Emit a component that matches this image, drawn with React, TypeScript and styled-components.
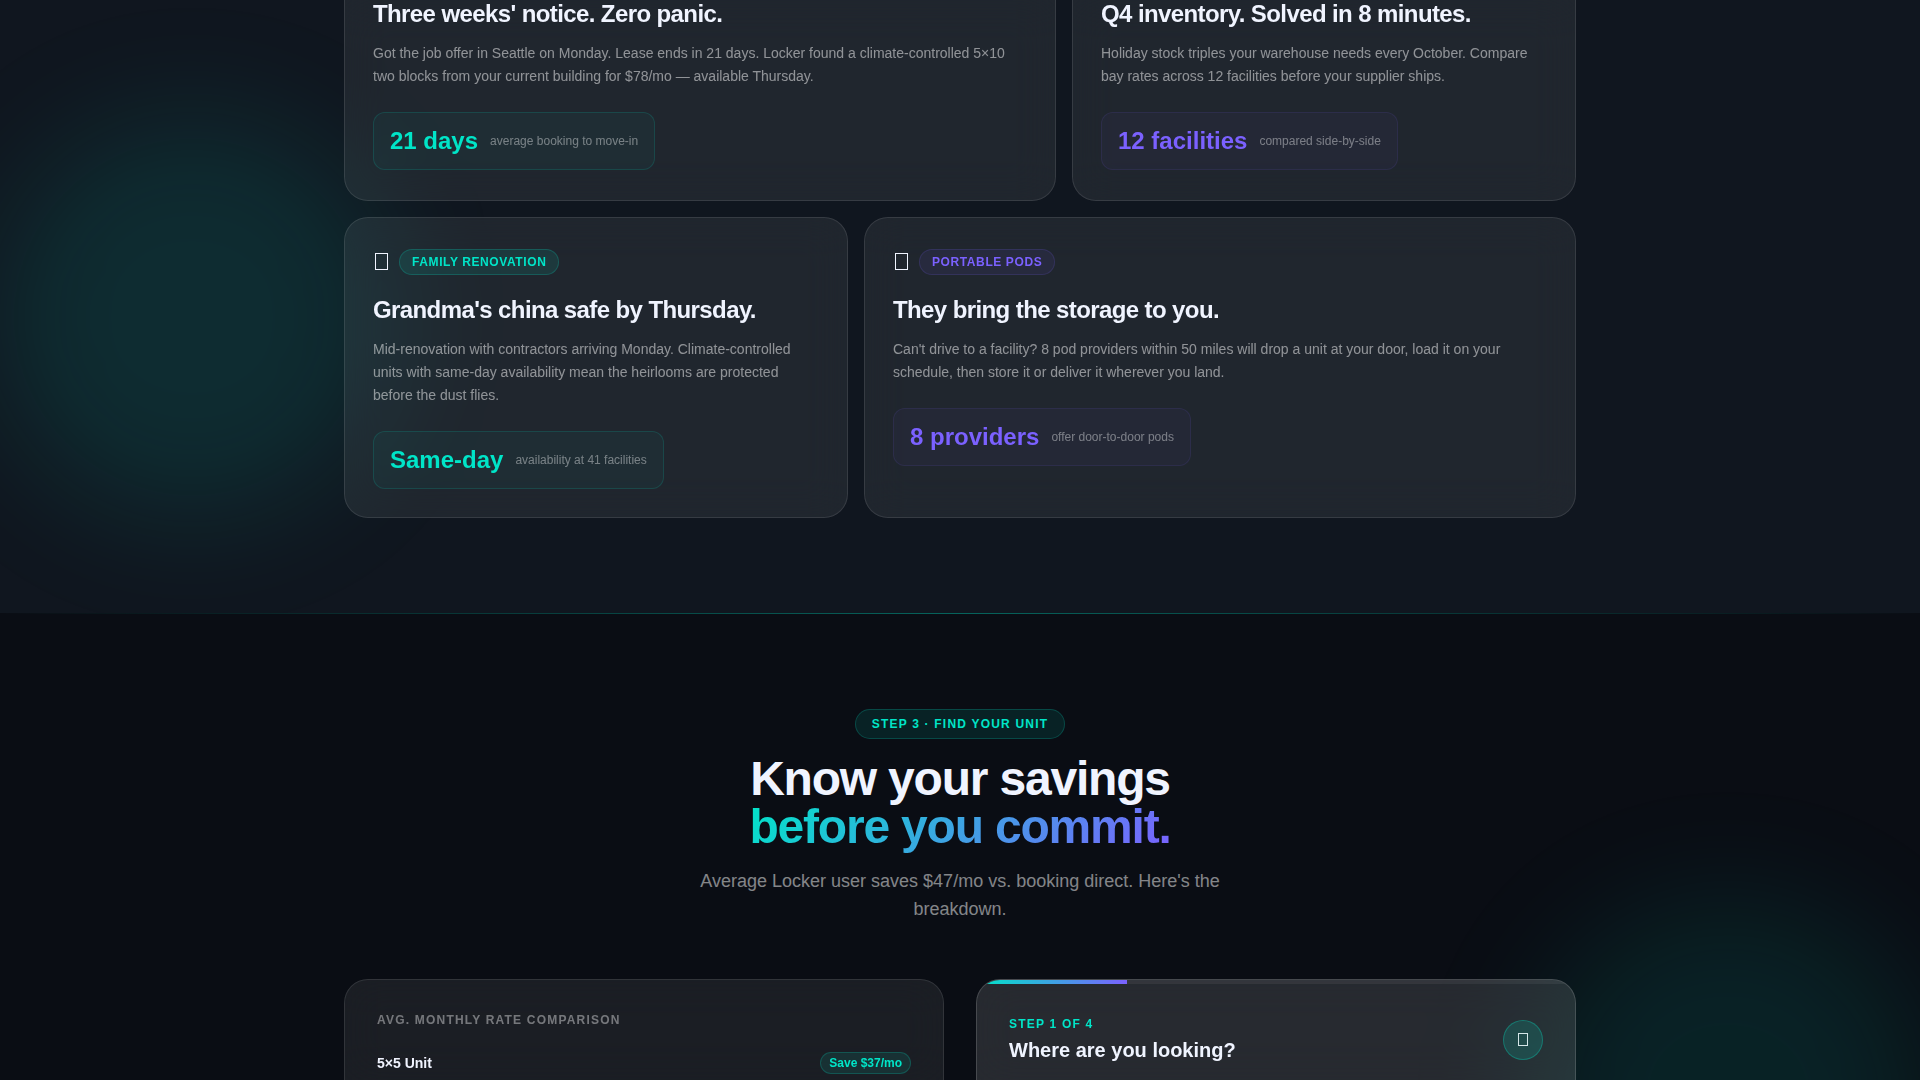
import React from "react";
import styled, { createGlobalStyle, css } from "styled-components";

type Tone = "teal" | "violet";

const rgb: Record<Tone, string> = { teal: "0, 229, 200", violet: "123, 97, 255" };

const GlobalStyle = createGlobalStyle`
  *, *::before, *::after { box-sizing: border-box; }
  body {
    margin: 0;
    background: #0a0d14;
    color: #f0f4ff;
    font-family: "Liberation Sans", Arial, sans-serif;
    font-size: 16px;
    line-height: 24px;
    overflow: hidden;
  }
  h2, h3, p { margin: 0; }
`;

const Page = styled.main`
  height: 100vh;
  overflow: hidden;
`;

const Container = styled.div`
  position: relative;
  max-width: 1280px;
  margin: 0 auto;
  padding: 0 24px;
`;

const Glow = styled.div<{ $strength: number }>`
  position: absolute;
  width: 400px;
  height: 400px;
  border-radius: 50%;
  background: rgba(0, 229, 200, ${(p) => p.$strength});
  filter: blur(60px);
  pointer-events: none;
`;

const StoriesSection = styled.section`
  position: relative;
  overflow: hidden;
  background: #10161f;
  padding-bottom: 95px;

  ${Glow} {
    left: calc(10% - 200px);
    bottom: 96px;
  }
`;

const StoryGrid = styled.div`
  display: grid;
  grid-template-columns: repeat(12, 1fr);
  gap: 16px;
  margin-top: -31px;
`;

const StoryCard = styled.article<{ $span: number; $minHeight?: number }>`
  grid-column: span ${(p) => p.$span};
  min-height: ${(p) => p.$minHeight ?? 280}px;
  padding: 28px;
  border: 1px solid rgba(255, 255, 255, 0.1);
  border-radius: 24px;
  background: rgba(255, 255, 255, 0.07);
  backdrop-filter: blur(20px);
`;

const StoryHead = styled.div`
  display: flex;
  align-items: center;
  gap: 8px;
  height: 32px;
  margin-bottom: 16px;
`;

const StoryIcon = styled.svg`
  width: 18px;
  height: 18px;
`;

const tinted = css<{ $tone: Tone }>`
  color: rgb(${(p) => rgb[p.$tone]});
`;

const Tag = styled.span<{ $tone: Tone }>`
  ${tinted}
  padding: 4px 12px;
  border: 1px solid rgba(${(p) => rgb[p.$tone]}, ${(p) => (p.$tone === "teal" ? 0.2 : 0.15)});
  border-radius: 999px;
  background: rgba(${(p) => rgb[p.$tone]}, ${(p) => (p.$tone === "teal" ? 0.1 : 0.08)});
  font-size: 12px;
  line-height: 16px;
  font-weight: 700;
  letter-spacing: 0.05em;
  text-transform: uppercase;
`;

const StoryTitle = styled.h3`
  margin-bottom: 12px;
  font-size: 24px;
  line-height: 32px;
  font-weight: 700;
  letter-spacing: -0.025em;
`;

const StoryText = styled.p`
  margin-bottom: 24px;
  color: rgba(255, 255, 255, 0.5);
  font-size: 14px;
  line-height: 23px;
`;

const Stat = styled.div<{ $tone: Tone }>`
  display: flex;
  align-items: center;
  gap: 12px;
  width: fit-content;
  padding: 12px 16px;
  border: 1px solid rgba(${(p) => rgb[p.$tone]}, ${(p) => (p.$tone === "teal" ? 0.15 : 0.1)});
  border-radius: 12px;
  background: rgba(${(p) => rgb[p.$tone]}, 0.04);
`;

const StatValue = styled.strong<{ $tone: Tone }>`
  ${tinted}
  font-size: 24px;
  line-height: 32px;
`;

const StatLabel = styled.span`
  color: rgba(255, 255, 255, 0.4);
  font-size: 12px;
  line-height: 16px;
`;

const SavingsSection = styled.section`
  position: relative;
  overflow: hidden;
  min-height: 700px;
  padding: 96px 0;
  background: #0a0d14;

  &::before {
    content: "";
    position: absolute;
    inset: 0 0 auto;
    height: 1px;
    background: linear-gradient(90deg, transparent, rgba(0, 229, 200, 0.4), transparent);
  }

  ${Glow} {
    left: calc(90% - 200px);
    top: 287px;
  }
`;

const SectionHead = styled.header`
  display: flex;
  flex-direction: column;
  align-items: center;
  gap: 16px;
  margin-bottom: 56px;
  text-align: center;
`;

const StepPill = styled.span`
  padding: 6px 16px;
  border: 1px solid rgba(0, 229, 200, 0.2);
  border-radius: 999px;
  background: rgba(0, 229, 200, 0.1);
  color: rgb(0, 229, 200);
  font-size: 12px;
  line-height: 16px;
  font-weight: 700;
  letter-spacing: 0.1em;
  text-transform: uppercase;
`;

const Headline = styled.h2`
  font-size: 48px;
  line-height: 48px;
  font-weight: 700;
  letter-spacing: -0.025em;
`;

const Gradient = styled.span`
  background: linear-gradient(135deg, #00e5c8 0%, #7b61ff 100%);
  background-clip: text;
  -webkit-background-clip: text;
  color: transparent;
`;

const Lead = styled.p`
  max-width: 576px;
  color: rgba(255, 255, 255, 0.5);
  font-size: 18px;
  line-height: 28px;
`;

const PanelGrid = styled.div`
  display: grid;
  grid-template-columns: 1fr 1fr;
  gap: 32px;
`;

const Panel = styled.div<{ $raised?: boolean }>`
  overflow: hidden;
  min-height: 420px;
  border: 1px solid rgba(255, 255, 255, ${(p) => (p.$raised ? 0.15 : 0.1)});
  border-radius: 24px;
  background: rgba(255, 255, 255, ${(p) => (p.$raised ? 0.12 : 0.07)});
  backdrop-filter: blur(20px);
`;

const PanelBody = styled.div`
  padding: 32px;
`;

const Overline = styled.p<{ $accent?: boolean }>`
  color: ${(p) => (p.$accent ? "rgb(0, 229, 200)" : "rgba(255, 255, 255, 0.4)")};
  font-size: 12px;
  line-height: 16px;
  font-weight: 700;
  letter-spacing: 0.1em;
  text-transform: uppercase;
`;

const RateRow = styled.div`
  display: flex;
  align-items: center;
  justify-content: space-between;
  margin-top: 24px;
`;

const RateName = styled.span`
  font-size: 14px;
  line-height: 20px;
  font-weight: 700;
`;

const SaveBadge = styled.span`
  padding: 2px 8px;
  border: 1px solid rgba(0, 229, 200, 0.2);
  border-radius: 999px;
  background: rgba(0, 229, 200, 0.1);
  color: rgb(0, 229, 200);
  font-size: 12px;
  line-height: 16px;
  font-weight: 700;
`;

const Track = styled.div`
  height: 4px;
  background: rgba(255, 255, 255, 0.06);
`;

const Fill = styled.div`
  height: 100%;
  background: linear-gradient(90deg, #00e5c8, #7b61ff);
`;

const WizardHead = styled.div`
  display: flex;
  align-items: center;
  justify-content: space-between;
`;

const WizardTitle = styled.h3`
  margin-top: 4px;
  font-size: 20px;
  line-height: 28px;
  font-weight: 700;
`;

const WizardBadge = styled.span`
  display: grid;
  place-items: center;
  width: 40px;
  height: 40px;
  border: 1px solid rgba(0, 229, 200, 0.3);
  border-radius: 50%;
  background: rgba(0, 229, 200, 0.15);
`;

const WizardIcon = styled.svg`
  width: 12px;
  height: 14px;
`;

interface Story {
  span: number;
  minHeight?: number;
  tone: Tone;
  tag?: string;
  title: string;
  text: string;
  value: string;
  label: string;
}

const stories: Story[] = [
  {
    span: 7,
    minHeight: 232,
    tone: "teal",
    title: "Three weeks' notice. Zero panic.",
    text: "Got the job offer in Seattle on Monday. Lease ends in 21 days. Locker found a climate-controlled 5×10 two blocks from your current building for $78/mo — available Thursday.",
    value: "21 days",
    label: "average booking to move-in",
  },
  {
    span: 5,
    minHeight: 232,
    tone: "violet",
    title: "Q4 inventory. Solved in 8 minutes.",
    text: "Holiday stock triples your warehouse needs every October. Compare bay rates across 12 facilities before your supplier ships.",
    value: "12 facilities",
    label: "compared side-by-side",
  },
  {
    span: 5,
    tone: "teal",
    tag: "Family Renovation",
    title: "Grandma's china safe by Thursday.",
    text: "Mid-renovation with contractors arriving Monday. Climate-controlled units with same-day availability mean the heirlooms are protected before the dust flies.",
    value: "Same-day",
    label: "availability at 41 facilities",
  },
  {
    span: 7,
    tone: "violet",
    tag: "Portable Pods",
    title: "They bring the storage to you.",
    text: "Can't drive to a facility? 8 pod providers within 50 miles will drop a unit at your door, load it on your schedule, then store it or deliver it wherever you land.",
    value: "8 providers",
    label: "offer door-to-door pods",
  },
];

const step = 1;
const stepCount = 4;

export default function App() {
  return (
    <Page>
      <GlobalStyle />
      <StoriesSection>
        <Glow $strength={0.11} />
        <Container>
          <StoryGrid>
            {stories.map((s) => (
              <StoryCard key={s.title} $span={s.span} $minHeight={s.minHeight}>
                {s.tag && (
                  <StoryHead>
                    <StoryIcon viewBox="0 0 18 18" aria-hidden="true">
                      <rect x="2.5" y="0.5" width="12" height="16" fill="none" stroke="#f0f4ff" />
                    </StoryIcon>
                    <Tag $tone={s.tone}>{s.tag}</Tag>
                  </StoryHead>
                )}
                <StoryTitle>{s.title}</StoryTitle>
                <StoryText>{s.text}</StoryText>
                <Stat $tone={s.tone}>
                  <StatValue $tone={s.tone}>{s.value}</StatValue>
                  <StatLabel>{s.label}</StatLabel>
                </Stat>
              </StoryCard>
            ))}
          </StoryGrid>
        </Container>
      </StoriesSection>

      <SavingsSection>
        <Glow $strength={0.1} />
        <Container>
          <SectionHead>
            <StepPill>Step 3 · Find your unit</StepPill>
            <Headline>
              Know your savings
              <br />
              <Gradient>before you commit.</Gradient>
            </Headline>
            <Lead>Average Locker user saves $47/mo vs. booking direct. Here's the breakdown.</Lead>
          </SectionHead>
          <PanelGrid>
            <Panel>
              <PanelBody>
                <Overline>Avg. monthly rate comparison</Overline>
                <RateRow>
                  <RateName>5×5 Unit</RateName>
                  <SaveBadge>Save $37/mo</SaveBadge>
                </RateRow>
              </PanelBody>
            </Panel>
            <Panel $raised>
              <Track>
                <Fill style={{ width: `${(step / stepCount) * 100}%` }} />
              </Track>
              <PanelBody>
                <WizardHead>
                  <div>
                    <Overline $accent>
                      Step {step} of {stepCount}
                    </Overline>
                    <WizardTitle>Where are you looking?</WizardTitle>
                  </div>
                  <WizardBadge>
                    <WizardIcon viewBox="0 0 12 14" aria-hidden="true">
                      <rect x="1.5" y="0.5" width="9" height="12" fill="none" stroke="#d5e6e8" />
                    </WizardIcon>
                  </WizardBadge>
                </WizardHead>
              </PanelBody>
            </Panel>
          </PanelGrid>
        </Container>
      </SavingsSection>
    </Page>
  );
}
